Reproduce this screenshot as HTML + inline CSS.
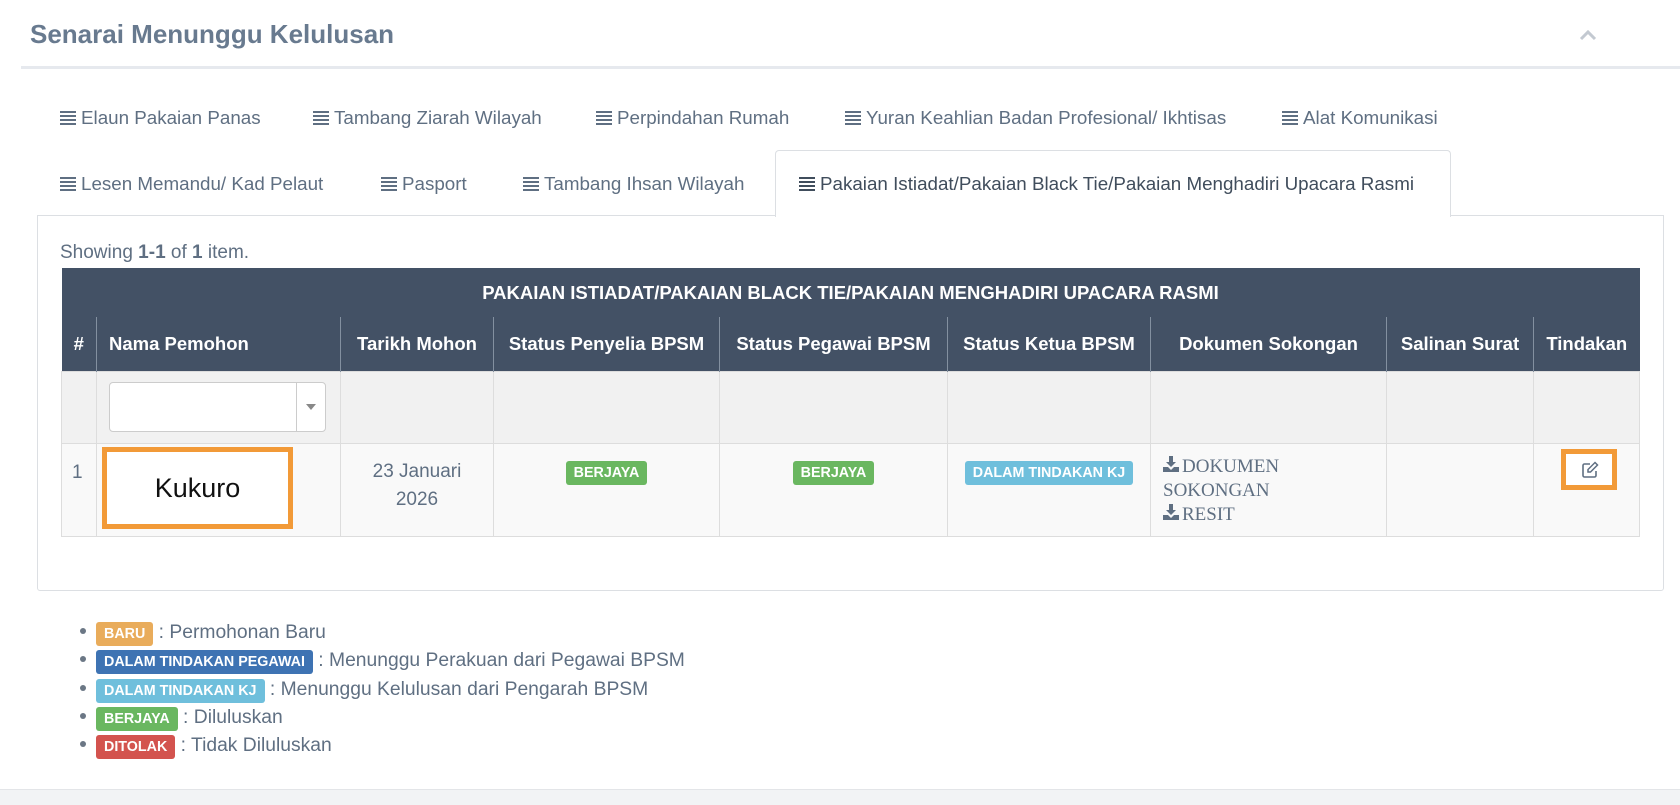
<!DOCTYPE html>
<html><head><meta charset="utf-8"><style>
*{box-sizing:border-box;margin:0;padding:0}
body{width:1680px;height:805px;background:#fff;font-family:"Liberation Sans",sans-serif;color:#5f6f82;position:relative;overflow:hidden;font-size:19px}
.a{position:absolute;white-space:nowrap}
.title{left:30px;top:19px;font-size:26px;font-weight:bold;color:#687a8f}
.hr{left:21px;top:66px;width:1659px;height:3px;background:#e6e9ee}
.tab{font-size:18.8px;color:#5f6f82}
.ic{display:inline-block;width:16px;height:14px;vertical-align:-1px;margin-right:5px;background:repeating-linear-gradient(#5f6f82 0 2px,transparent 2px 4px)}
.panel{left:37px;top:215px;width:1627px;height:376px;border:1px solid #dcdfe3;border-radius:0 0 3px 3px}
.atab{left:775px;top:150px;width:676px;height:67px;border:1px solid #dcdfe3;border-bottom:none;background:#fff;border-radius:4px 4px 0 0}
table{position:absolute;left:61px;top:268px;width:1579px;border-collapse:collapse}
th{background:#435165;color:#fff;font-size:18.5px;font-weight:bold;border-left:1px solid #8390a0;white-space:nowrap}
td{border:1px solid #dddddd;vertical-align:top;font-size:19px;color:#5f6f82}
.badge{display:inline-block;color:#fff;font-size:14.3px;font-weight:bold;padding:4px 8px;border-radius:3px}
.g{background:#6ab760}.b{background:#6fbfdc}.o{background:#e9ac5b}.d{background:#3e73b3}.r{background:#d3534e}
.leg{left:80px;font-size:19.3px;color:#5f6f82}
.leg i{display:inline-block;width:6px;height:6px;border-radius:50%;background:#6b7785;margin-right:10px;vertical-align:4px}
.dl{display:inline-block;vertical-align:0px;margin-right:3px}
</style></head><body>
<div class="a title">Senarai Menunggu Kelulusan</div>
<svg class="a" style="left:1578px;top:29px" width="20" height="12"><path d="M3 10L10 3L17 10" stroke="#c3c9d1" stroke-width="3" fill="none"/></svg>
<div class="a hr"></div>
<div class="a panel"></div>
<div class="a atab"></div>
<div class="a tab" style="left:60px;top:107px"><span class="ic"></span>Elaun Pakaian Panas</div>
<div class="a tab" style="left:313px;top:107px"><span class="ic"></span>Tambang Ziarah Wilayah</div>
<div class="a tab" style="left:596px;top:107px"><span class="ic"></span>Perpindahan Rumah</div>
<div class="a tab" style="left:845px;top:107px"><span class="ic"></span>Yuran Keahlian Badan Profesional/ Ikhtisas</div>
<div class="a tab" style="left:1282px;top:107px"><span class="ic"></span>Alat Komunikasi</div>
<div class="a tab" style="left:60px;top:173px"><span class="ic"></span>Lesen Memandu/ Kad Pelaut</div>
<div class="a tab" style="left:381px;top:173px"><span class="ic"></span>Pasport</div>
<div class="a tab" style="left:523px;top:173px"><span class="ic"></span>Tambang Ihsan Wilayah</div>
<div class="a tab" style="left:799px;top:173px;color:#404d5c"><span class="ic" style="background:repeating-linear-gradient(#404d5c 0 2px,transparent 2px 4px)"></span>Pakaian Istiadat/Pakaian Black Tie/Pakaian Menghadiri Upacara Rasmi</div>
<div class="a" style="left:60px;top:242px;font-size:19px">Showing <b>1-1</b> of <b>1</b> item.</div>
<table>
<tr><th colspan="9" style="height:49px;border-left:none">PAKAIAN ISTIADAT/PAKAIAN BLACK TIE/PAKAIAN MENGHADIRI UPACARA RASMI</th></tr>
<tr style="height:54px"><th style="width:35px;border-left:none">#</th><th style="width:244px;text-align:left;padding-left:12px">Nama Pemohon</th><th style="width:153px">Tarikh Mohon</th><th style="width:226px">Status Penyelia BPSM</th><th style="width:228px">Status Pegawai BPSM</th><th style="width:203px">Status Ketua BPSM</th><th style="width:236px">Dokumen Sokongan</th><th style="width:147px">Salinan Surat</th><th>Tindakan</th></tr>
<tr style="background:#f1f1f1;height:72px"><td></td><td><div style="margin:10px 0 0 12px;width:217px;height:50px;background:#fff;border:1px solid #ccc;border-radius:4px;position:relative"><div style="position:absolute;right:28px;top:0;bottom:0;border-left:1px solid #ccc"></div><div style="position:absolute;right:9px;top:21px;border:5px solid transparent;border-top:6px solid #888"></div></div></td><td></td><td></td><td></td><td></td><td></td><td></td><td></td></tr>
<tr style="background:#f9f9f9;height:93px">
<td style="padding:18px 0 0 10px">1</td>
<td><div style="margin:3px 0 0 5px;width:191px;height:82px;border:5px solid #f29a38;background:#fff;color:#111;font-size:27px;text-align:center;line-height:72px">Kukuro</div></td>
<td style="text-align:center;padding-top:14px;line-height:28px">23 Januari<br>2026</td>
<td style="text-align:center;padding-top:17px"><span class="badge g">BERJAYA</span></td>
<td style="text-align:center;padding-top:17px"><span class="badge g">BERJAYA</span></td>
<td style="text-align:center;padding-top:17px"><span class="badge b">DALAM TINDAKAN KJ</span></td>
<td style="padding:11px 0 0 12px;font-family:'Liberation Serif',serif;font-size:19px;line-height:24px"><svg class="dl" width="16" height="16" viewBox="0 0 16 16"><path d="M6 0h4v6h3l-5 5-5-5h3z" fill="#5f6f82"/><path d="M0 11h5l3 3 3-3h5v5H0z" fill="#5f6f82"/></svg>DOKUMEN<br>SOKONGAN<br><svg class="dl" width="16" height="16" viewBox="0 0 16 16"><path d="M6 0h4v6h3l-5 5-5-5h3z" fill="#5f6f82"/><path d="M0 11h5l3 3 3-3h5v5H0z" fill="#5f6f82"/></svg>RESIT</td>
<td></td>
<td><div style="margin:5px 0 0 27px;width:56px;height:41px;border:5px solid #f29a38;background:#fff;position:relative"><svg style="position:absolute;left:15px;top:7px" width="18" height="18" viewBox="0 0 18 18"><path d="M9 3H3.5a1.5 1.5 0 0 0-1.5 1.5v10a1.5 1.5 0 0 0 1.5 1.5h10a1.5 1.5 0 0 0 1.5-1.5V10" stroke="#5f6f82" stroke-width="1.6" fill="none"/><path d="M14 1.5l2.5 2.5-7 7H7V8.5z" stroke="#5f6f82" stroke-width="1.5" fill="none"/></svg></div></td>
</tr>
</table>
<div class="a leg" style="top:622px"><i></i><span class="badge o">BARU</span> : Permohonan Baru</div>
<div class="a leg" style="top:650px"><i></i><span class="badge d">DALAM TINDAKAN PEGAWAI</span> : Menunggu Perakuan dari Pegawai BPSM</div>
<div class="a leg" style="top:679px"><i></i><span class="badge b">DALAM TINDAKAN KJ</span> : Menunggu Kelulusan dari Pengarah BPSM</div>
<div class="a leg" style="top:707px"><i></i><span class="badge g">BERJAYA</span> : Diluluskan</div>
<div class="a leg" style="top:735px"><i></i><span class="badge r">DITOLAK</span> : Tidak Diluluskan</div>
<div class="a" style="left:0;top:789px;width:1680px;height:16px;background:#f2f3f5;border-top:1px solid #e3e5e8"></div>
</body></html>
